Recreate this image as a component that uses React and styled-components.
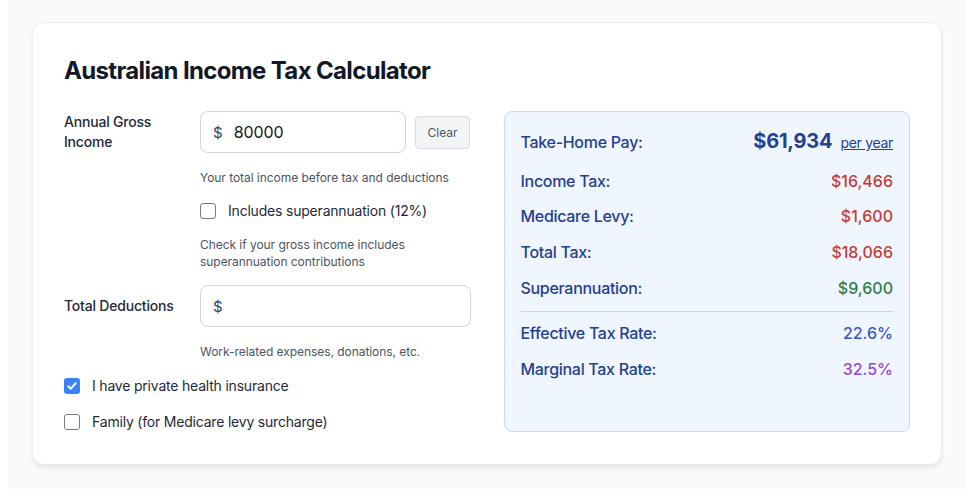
import React, { useState } from "react";
import styled, { createGlobalStyle } from "styled-components";

const Global = createGlobalStyle`
  html, body { margin: 0; padding: 0; background: #ffffff; }
  body { font-family: Inter, "Noto Sans", Roboto, sans-serif; color: #111827; }
  * { box-sizing: border-box; }
`;

const Page = styled.div`
  margin: 0 8px;
  padding: 22px 24px 24px;
  background: #f9fafb;
`;

const Card = styled.div`
  background: #ffffff;
  border: 1px solid #eceef1;
  border-radius: 12px;
  box-shadow: 0 4px 6px -1px rgba(0,0,0,0.08), 0 2px 4px -2px rgba(0,0,0,0.06);
  padding: 31px 31px 32px;
`;

const Title = styled.h1`
  margin: 0 0 24px;
  font-size: 24px;
  line-height: 33px;
  font-weight: 700;
  color: #111827;
  letter-spacing: -0.65px;
`;

const Grid = styled.div`
  display: grid;
  grid-template-columns: minmax(0, 1fr) minmax(0, 1fr);
  gap: 33px;
  align-items: stretch;
`;

const Column = styled.div`
  display: flex;
  flex-direction: column;
  min-width: 0;
`;

const FieldRow = styled.div`
  display: flex;
  align-items: center;
  margin-top: ${(p) => p.$mt || 0}px;
`;

const Label = styled.label`
  width: 136px;
  flex: none;
  font-size: 14px;
  line-height: 20px;
  font-weight: 500;
  color: #1f2937;
  padding-right: 16px;
  letter-spacing: -0.2px;
`;

const InputBox = styled.div`
  display: flex;
  align-items: center;
  flex: ${(p) => (p.$grow ? "1 1 0" : "none")};
  width: ${(p) => (p.$grow ? "auto" : "206px")};
  min-width: 0;
  height: 42px;
  border: 1px solid #d1d5db;
  border-radius: 8px;
  padding: 0 12px;
  background: #ffffff;
`;

const Currency = styled.span`
  font-size: 15px;
  color: #374151;
  margin-right: 11px;
`;

const Input = styled.input`
  border: none;
  outline: none;
  flex: 1 1 0;
  width: 0;
  min-width: 0;
  font-family: inherit;
  font-size: 16px;
  color: #111827;
  padding: 0;
  background: transparent;
  letter-spacing: -0.1px;
`;

const ClearButton = styled.button`
  margin-left: 9px;
  width: 55px;
  height: 33px;
  border: 1px solid #d9dce1;
  border-radius: 4px;
  background: #f3f4f6;
  font-family: inherit;
  font-size: 12px;
  color: #4b5563;
  padding: 0;
`;

const Help = styled.p`
  margin: ${(p) => p.$mt || 0}px 0 0 ${(p) => (p.$indent ? 136 : 0)}px;
  font-size: 12px;
  line-height: 17px;
  color: #4b5563;
  letter-spacing: -0.05px;
  max-width: ${(p) => p.$max || "none"};
`;

const CheckRow = styled.label`
  display: flex;
  align-items: center;
  gap: 12px;
  margin: ${(p) => p.$mt || 0}px 0 0 ${(p) => (p.$indent ? 136 : 0)}px;
  font-size: 14px;
  line-height: 20px;
  color: #1f2937;
  letter-spacing: -0.2px;
  cursor: pointer;
`;

const Box = styled.span`
  width: 16px;
  height: 16px;
  flex: none;
  border-radius: 3px;
  border: ${(p) => (p.$checked ? "none" : "1px solid #767b85")};
  background: ${(p) => (p.$checked ? "#3b82f6" : "#ffffff")};
  display: flex;
  align-items: center;
  justify-content: center;
`;

const Panel = styled.div`
  background: #eff6ff;
  border: 1px solid #c5dcf7;
  border-radius: 8px;
  padding: 16px 16px 16px;
  display: flex;
  flex-direction: column;
`;

const ResultRow = styled.div`
  display: flex;
  align-items: center;
  justify-content: space-between;
  min-height: ${(p) => p.$h || 24}px;
  margin-top: ${(p) => p.$mt || 0}px;
  font-size: 16px;
  line-height: 24px;
  font-weight: 500;
`;

const ResultLabel = styled.span`
  color: #25408f;
  letter-spacing: -0.3px;
`;

const Value = styled.span`
  color: ${(p) => p.$color};
`;

const BigValue = styled.span`
  display: flex;
  align-items: baseline;
  gap: 8px;
`;

const Big = styled.span`
  font-size: 20px;
  font-weight: 700;
  color: #25408f;
  letter-spacing: -0.2px;
`;

const PerYear = styled.a`
  font-size: 14px;
  font-weight: 400;
  color: #25408f;
  text-decoration: underline;
  letter-spacing: -0.3px;
`;

const Divider = styled.hr`
  border: none;
  border-top: 1px solid #c9d3e2;
  margin: 11px 0 9px;
`;

const Check = () => (
  <svg width="12" height="12" viewBox="0 0 12 12" fill="none">
    <path d="M2.3 6.3l2.4 2.4 5-5.4" stroke="#fff" strokeWidth="2" strokeLinecap="round" strokeLinejoin="round" />
  </svg>
);

function CheckBox({ checked, onChange, children, indent, mt }) {
  return (
    <CheckRow $indent={indent} $mt={mt} onClick={onChange}>
      <Box $checked={checked}>{checked && <Check />}</Box>
      <span>{children}</span>
    </CheckRow>
  );
}

export default function App() {
  const [income, setIncome] = useState("80000");
  const [ded, setDed] = useState("");
  const [superInc, setSuperInc] = useState(false);
  const [health, setHealth] = useState(true);
  const [family, setFamily] = useState(false);

  return (
    <>
      <Global />
      <Page>
        <Card>
          <Title>Australian Income Tax Calculator</Title>
          <Grid>
            <Column>
              <FieldRow>
                <Label>Annual Gross Income</Label>
                <InputBox>
                  <Currency>$</Currency>
                  <Input value={income} onChange={(e) => setIncome(e.target.value)} />
                </InputBox>
                <ClearButton onClick={() => setIncome("")}>Clear</ClearButton>
              </FieldRow>
              <Help $indent $mt={16}>Your total income before tax and deductions</Help>
              <CheckBox indent mt={15} checked={superInc} onChange={() => setSuperInc(!superInc)}>
                Includes superannuation (12%)
              </CheckBox>
              <Help $indent $mt={15} $max="230px">
                Check if your gross income includes superannuation contributions
              </Help>
              <FieldRow $mt={15}>
                <Label>Total Deductions</Label>
                <InputBox $grow>
                  <Currency>$</Currency>
                  <Input value={ded} onChange={(e) => setDed(e.target.value)} />
                </InputBox>
              </FieldRow>
              <Help $indent $mt={16}>Work-related expenses, donations, etc.</Help>
              <CheckBox mt={16} checked={health} onChange={() => setHealth(!health)}>
                I have private health insurance
              </CheckBox>
              <CheckBox mt={16} checked={family} onChange={() => setFamily(!family)}>
                Family (for Medicare levy surcharge)
              </CheckBox>
            </Column>
            <Panel>
              <ResultRow $h={28}>
                <ResultLabel>Take-Home Pay:</ResultLabel>
                <BigValue>
                  <Big>$61,934</Big>
                  <PerYear href="#">per year</PerYear>
                </BigValue>
              </ResultRow>
              <ResultRow $mt={13}>
                <ResultLabel>Income Tax:</ResultLabel>
                <Value $color="#c53b34">$16,466</Value>
              </ResultRow>
              <ResultRow $mt={11}>
                <ResultLabel>Medicare Levy:</ResultLabel>
                <Value $color="#c53b34">$1,600</Value>
              </ResultRow>
              <ResultRow $mt={12}>
                <ResultLabel>Total Tax:</ResultLabel>
                <Value $color="#c53b34">$18,066</Value>
              </ResultRow>
              <ResultRow $mt={12}>
                <ResultLabel>Superannuation:</ResultLabel>
                <Value $color="#2f7d47">$9,600</Value>
              </ResultRow>
              <Divider />
              <ResultRow>
                <ResultLabel>Effective Tax Rate:</ResultLabel>
                <Value $color="#3a58c2">22.6%</Value>
              </ResultRow>
              <ResultRow $mt={12}>
                <ResultLabel>Marginal Tax Rate:</ResultLabel>
                <Value $color="#9b47cf">32.5%</Value>
              </ResultRow>
            </Panel>
          </Grid>
        </Card>
      </Page>
    </>
  );
}
